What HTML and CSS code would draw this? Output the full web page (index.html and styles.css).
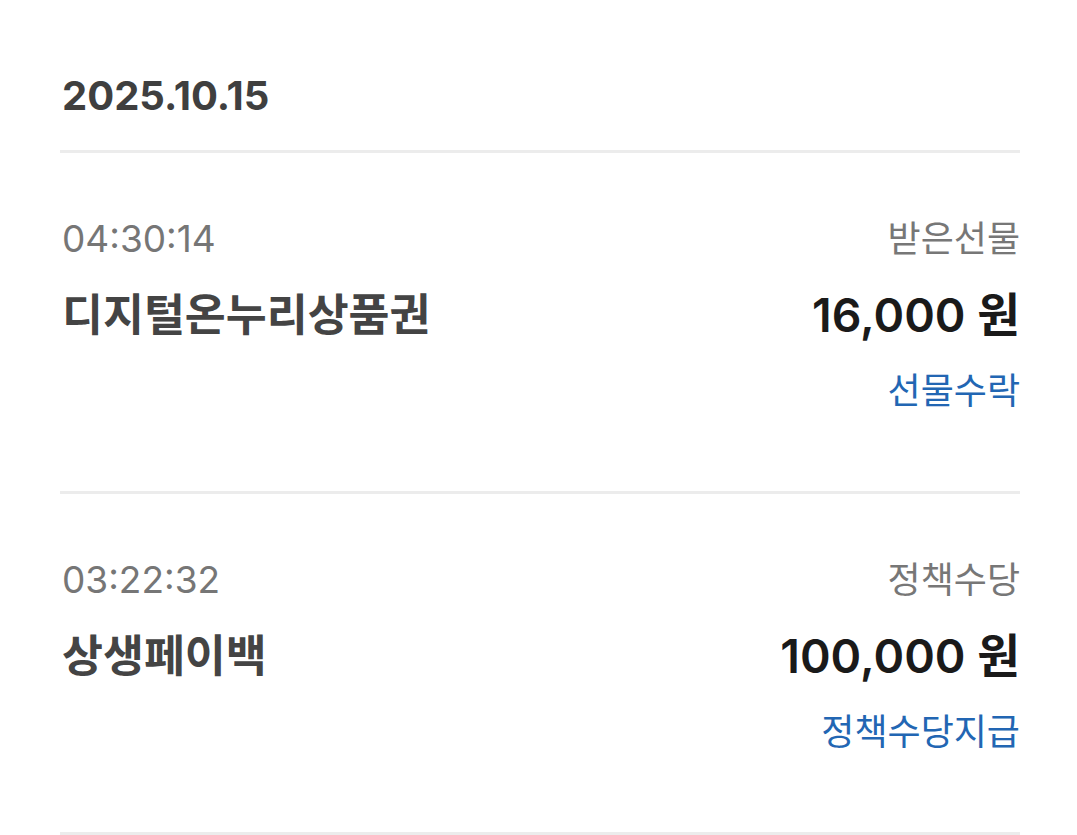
FILE: index.html
```html
<!DOCTYPE html>
<html lang="ko">
  <head>
    <meta charset="UTF-8" />
    <meta name="viewport" content="width=device-width, initial-scale=1.0" />
    <title>선물 내역</title>
    <link rel="stylesheet" href="styles.css">
  </head>
  <body>
    <div class="history">
      <h2 class="date-head">2025.10.15</h2>

      <div class="item">
        <div class="row">
          <span class="time">04:30:14</span>
          <span class="kind">받은선물</span>
        </div>
        <div class="row">
          <span class="name">디지털온누리상품권</span>
          <span class="amount">16,000 원</span>
        </div>
        <div class="row row-end">
          <a class="action" href="#">선물수락</a>
        </div>
      </div>

      <div class="item">
        <div class="row">
          <span class="time">03:22:32</span>
          <span class="kind">정책수당</span>
        </div>
        <div class="row">
          <span class="name">상생페이백</span>
          <span class="amount">100,000 원</span>
        </div>
        <div class="row row-end">
          <a class="action" href="#">정책수당지급</a>
        </div>
      </div>
    </div>
  </body>
</html>
```

FILE: styles.css
```css
body {
  margin: 0;
  background: #fff;
  font-family: Inter, "Noto Sans CJK KR", sans-serif;
}
.history {
  padding: 0 57px 0 60px;
}
.date-head {
  margin: 0;
  padding: 72px 0 30px 2px;
  font-size: 40px;
  line-height: 48px;
  font-weight: 700;
  color: #3f3f3f;
  border-bottom: 3px solid #ececec;
}
.item {
  padding: 62px 0 76px 2px;
  border-bottom: 3px solid #ececec;
}
.row {
  display: flex;
  justify-content: space-between;
  align-items: center;
}
.row + .row {
  margin-top: 24px;
}
.row-end {
  justify-content: flex-end;
}
.time {
  font-size: 37px;
  line-height: 48px;
  color: #767676;
}
.kind {
  font-size: 36px;
  line-height: 48px;
  color: #777;
}
.name {
  font-size: 44.5px;
  line-height: 56px;
  font-weight: 700;
  color: #444;
}
.amount {
  font-size: 46.5px;
  line-height: 56px;
  font-weight: 600;
  color: #1a1a1a;
}
.action {
  font-size: 36px;
  line-height: 48px;
  color: #2266b3;
  text-decoration: none;
}
```
